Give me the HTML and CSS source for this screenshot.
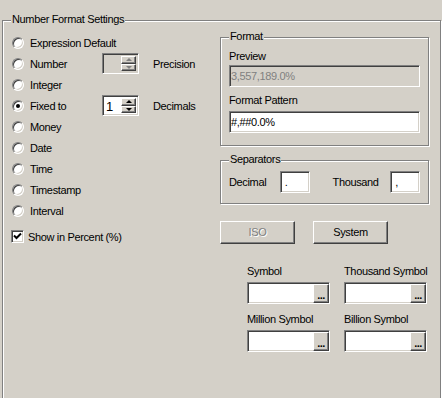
FILE: index.html
```html
<!DOCTYPE html>
<html>
<head>
<meta charset="utf-8">
<title>Number Format Settings</title>
<link rel="stylesheet" href="styles.css">
</head>
<body>
<div class="grp outer">
  <span class="cap">Number Format Settings</span>

  <div class="types">
    <div class="row"><span class="radio"></span>Expression Default</div>
    <div class="row"><span class="radio"></span><span class="lbl">Number</span>
      <span class="spin off"><span class="spinval"></span><span class="spinbtns"><span class="sb"><i class="up"></i></span><span class="sb"><i class="dn"></i></span></span></span>
      <span class="unit">Precision</span></div>
    <div class="row"><span class="radio"></span>Integer</div>
    <div class="row"><span class="radio on"></span><span class="lbl">Fixed to</span>
      <span class="spin"><span class="spinval">1</span><span class="spinbtns"><span class="sb"><i class="up"></i></span><span class="sb"><i class="dn"></i></span></span></span>
      <span class="unit">Decimals</span></div>
    <div class="row"><span class="radio"></span>Money</div>
    <div class="row"><span class="radio"></span>Date</div>
    <div class="row"><span class="radio"></span>Time</div>
    <div class="row"><span class="radio"></span>Timestamp</div>
    <div class="row"><span class="radio"></span>Interval</div>
    <div class="row chkrow"><span class="chk"><svg width="11" height="11" viewBox="0 0 11 11"><path d="M2 4.5 L4.5 7 L9 2.5" fill="none" stroke="#000" stroke-width="2"/></svg></span>Show in Percent (%)</div>
  </div>

  <div class="side">
    <div class="grp fmt">
      <span class="cap">Format</span>
      <div class="flabel">Preview</div>
      <div class="field dis">3,557,189.0%</div>
      <div class="flabel pat">Format Pattern</div>
      <div class="field">#,##0.0%</div>
    </div>

    <div class="grp seps">
      <span class="cap">Separators</span>
      <span class="slbl">Decimal</span><span class="field sm">.</span>
      <span class="slbl th">Thousand</span><span class="field sm">,</span>
    </div>

    <div class="btnrow">
      <span class="btn dis">ISO</span>
      <span class="btn">System</span>
    </div>

    <div class="syms">
      <div>
        <div class="flabel">Symbol</div>
        <div class="field pick"><span class="pv"></span><span class="dots">...</span></div>
      </div>
      <div>
        <div class="flabel">Thousand Symbol</div>
        <div class="field pick"><span class="pv"></span><span class="dots">...</span></div>
      </div>
      <div>
        <div class="flabel">Million Symbol</div>
        <div class="field pick"><span class="pv"></span><span class="dots">...</span></div>
      </div>
      <div>
        <div class="flabel">Billion Symbol</div>
        <div class="field pick"><span class="pv"></span><span class="dots">...</span></div>
      </div>
    </div>
  </div>
</div>
</body>
</html>
```

FILE: styles.css
```css
* { box-sizing: border-box; }
body { margin: 0; background: #d4d0c8; font-family: "Liberation Sans", Arial, sans-serif; font-size: 11px; letter-spacing: -0.35px; color: #000; overflow: hidden; }

/* etched group box */
.grp { position: relative; border: 1px solid #808080; box-shadow: inset 1px 1px 0 #fff, 1px 1px 0 #fff; }
.cap { position: absolute; top: -8px; left: 8px; padding: 0 1px; line-height: 13px; background: #d4d0c8; white-space: nowrap; }

.outer { display: flex; width: 439px; height: 380px; margin: 20px 0 0 2px; }

/* left column */
.types { width: 217px; padding: 11px 0 0 9px; }
.row { display: flex; align-items: center; height: 21px; white-space: nowrap; }
.lbl { width: 72px; }
.unit { margin-left: 14px; }

.radio { position: relative; width: 12px; height: 12px; margin-right: 6px; border-radius: 50%; background: #fff; border: 1px solid; border-color: #808080 #fff #fff #808080; box-shadow: inset 1px 1px 0 #404040, inset -1px -1px 0 #d4d0c8; }
.radio.on:after { content: ""; position: absolute; left: 3px; top: 3px; width: 4px; height: 4px; border-radius: 50%; background: #000; }

.chkrow { margin-top: 5px; margin-left: -1px; }
.chk { display: flex; width: 13px; height: 13px; margin-right: 4px; background: #fff; border: 1px solid; border-color: #808080 #fff #fff #808080; box-shadow: inset 1px 1px 0 #404040, inset -1px -1px 0 #d4d0c8; }
.chk svg { display: block; margin: 0; }

/* sunken fields */
.field { background: #fff; border: 1px solid; border-color: #808080 #fff #fff #808080; box-shadow: inset 1px 1px 0 #404040, inset -1px -1px 0 #d4d0c8; height: 22px; line-height: 20px; padding: 0 3px; }
.field.dis { background: #d4d0c8; color: #808080; }

.spin { display: flex; width: 37px; height: 21px; padding: 2px; background: #fff; border: 1px solid; border-color: #808080 #fff #fff #808080; box-shadow: inset 1px 1px 0 #404040, inset -1px -1px 0 #d4d0c8; }
.spin.off { background: #d4d0c8; }
.spinval { flex: 1; font-size: 13px; line-height: 17px; padding-left: 1px; }
.spinbtns { display: flex; flex-direction: column; width: 15px; }
.sb { flex: 1; display: flex; align-items: center; justify-content: center; background: #d4d0c8; border: 1px solid; border-color: #fff #404040 #404040 #fff; box-shadow: inset -1px -1px 0 #808080; }
.sb i { width: 0; height: 0; border-left: 3px solid transparent; border-right: 3px solid transparent; }
.sb i.up { border-bottom: 3px solid #000; }
.sb i.dn { border-top: 3px solid #000; }
.off .sb i.up { border-bottom-color: #808080; }
.off .sb i.dn { border-top-color: #808080; }

/* right column */
.side { width: 220px; padding-top: 16px; }
.fmt { width: 209px; height: 109px; padding: 12px 8px 0 8px; }
.flabel { line-height: 13px; white-space: nowrap; }
.fmt .field { margin-top: 2px; padding-left: 1px; }
.fmt .pat { margin-top: 7px; }
.fmt .pat + .field { margin-top: 4px; }

.seps { display: flex; align-items: center; width: 209px; height: 44px; margin-top: 14px; padding: 0 8px; }
.slbl { width: 51px; }
.slbl.th { width: 58px; margin-left: 23px; }
.field.sm { width: 30px; padding-left: 4px; }

.btnrow { display: flex; gap: 18px; margin-top: 17px; }
.btn { width: 75px; height: 23px; line-height: 21px; text-align: center; background: #d4d0c8; border: 1px solid; border-color: #fff #404040 #404040 #fff; box-shadow: inset -1px -1px 0 #808080; }
.btn.dis { color: #808080; text-shadow: 1px 1px 0 #fff; }

.syms { display: grid; grid-template-columns: 83px 83px; column-gap: 14px; row-gap: 9px; margin: 21px 0 0 27px; }
.syms .field { margin-top: 4px; }
.pick { display: flex; padding: 1px 0 0 2px; }
.pv { flex: 1; }
.dots { width: 16px; height: 19px; line-height: 21px; font-weight: bold; letter-spacing: -0.5px; text-align: center; background: #d4d0c8; border: 1px solid; border-color: #fff #404040 #404040 #fff; box-shadow: inset -1px -1px 0 #808080; overflow: hidden; }
```
